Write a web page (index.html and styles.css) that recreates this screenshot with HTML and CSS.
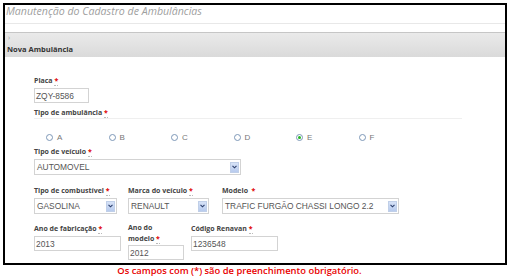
FILE: index.html
```html
<!DOCTYPE html>
<html lang="pt-BR">
<head>
<meta charset="utf-8">
<title>Manutenção do Cadastro de Ambulâncias</title>
<link rel="stylesheet" href="styles.css">
</head>
<body>
<div class="frame">
  <div class="page-title">Manutenção do Cadastro de Ambulâncias</div>
  <div class="panel-head">
    <span class="toggle">›</span>
    <span class="head-title">Nova Ambulância</span>
  </div>
  <div class="form">
    <div class="field f-placa">
      <div class="label">Placa <abbr class="req" title="obrigatório">*</abbr></div>
      <div class="input w-placa">ZQY-8586</div>
    </div>

    <div class="group">
      <div class="label group-label">Tipo de ambulância <abbr class="req" title="obrigatório">*</abbr></div>
      <div class="radios">
        <div class="radio"><span class="dot"></span><span>A</span></div>
        <div class="radio"><span class="dot"></span><span>B</span></div>
        <div class="radio"><span class="dot"></span><span>C</span></div>
        <div class="radio"><span class="dot"></span><span>D</span></div>
        <div class="radio"><span class="dot checked"></span><span>E</span></div>
        <div class="radio"><span class="dot"></span><span>F</span></div>
      </div>
    </div>

    <div class="field f-veiculo">
      <div class="label">Tipo de veículo <abbr class="req" title="obrigatório">*</abbr></div>
      <div class="select w-veiculo"><span class="val">AUTOMOVEL</span><span class="arrow"><svg width="5" height="4" viewBox="0 0 5 4"><path d="M0.5 0.8 L2.5 2.8 L4.5 0.8" fill="none" stroke="#2a3d6a" stroke-width="1.1"/></svg></span></div>
    </div>

    <div class="row row3">
      <div class="field">
        <div class="label">Tipo de combustível <abbr class="req" title="obrigatório">*</abbr></div>
        <div class="select w-comb"><span class="val">GASOLINA</span><span class="arrow"><svg width="5" height="4" viewBox="0 0 5 4"><path d="M0.5 0.8 L2.5 2.8 L4.5 0.8" fill="none" stroke="#2a3d6a" stroke-width="1.1"/></svg></span></div>
      </div>
      <div class="field">
        <div class="label">Marca do veículo <abbr class="req" title="obrigatório">*</abbr></div>
        <div class="select w-marca"><span class="val">RENAULT</span><span class="arrow"><svg width="5" height="4" viewBox="0 0 5 4"><path d="M0.5 0.8 L2.5 2.8 L4.5 0.8" fill="none" stroke="#2a3d6a" stroke-width="1.1"/></svg></span></div>
      </div>
      <div class="field">
        <div class="label">Modelo &nbsp;<span class="req plain">*</span></div>
        <div class="select w-modelo"><span class="val">TRAFIC FURGÃO CHASSI LONGO 2.2</span><span class="arrow"><svg width="5" height="4" viewBox="0 0 5 4"><path d="M0.5 0.8 L2.5 2.8 L4.5 0.8" fill="none" stroke="#2a3d6a" stroke-width="1.1"/></svg></span></div>
      </div>
    </div>

    <div class="row row4">
      <div class="field">
        <div class="label">Ano de fabricação <abbr class="req" title="obrigatório">*</abbr></div>
        <div class="input w-anofab">2013</div>
      </div>
      <div class="field">
        <div class="label two">Ano do<br>modelo <abbr class="req" title="obrigatório">*</abbr></div>
        <div class="input w-anomod">2012</div>
      </div>
      <div class="field">
        <div class="label">Código Renavan <abbr class="req" title="obrigatório">*</abbr></div>
        <div class="input w-renavan">1236548</div>
      </div>
    </div>
  </div>
</div>
<p class="note">Os campos com (*) são de preenchimento obrigatório.</p>
</body>
</html>
```

FILE: styles.css
```css
html, body {
  margin: 0;
  padding: 0;
  background: #fff;
}

body {
  width: 511px;
  height: 278px;
  overflow: hidden;
  font-family: "Open Sans", "Liberation Sans", sans-serif;
}

.frame {
  margin: 3px 0 0 3px;
  width: 500px;
  height: 258px;
  border: 2px solid #000;
  display: flex;
  flex-direction: column;
  overflow: hidden;
}

.page-title {
  height: 18px;
  line-height: 13px;
  padding-left: 1px;
  font-size: 10.6px;
  font-style: italic;
  color: #a0a0a0;
  border-bottom: 1px solid #e8e8e8;
}

.panel-head {
  margin-top: 8px;
  height: 24px;
  border-top: 1px solid #c6c6c6;
  background: linear-gradient(#eaeaea, #dadada);
  display: flex;
  flex-direction: column;
  padding-left: 2px;
}

.toggle {
  font-size: 7px;
  line-height: 8px;
  color: #999;
  padding-left: 1px;
  margin-top: 1px;
}

.head-title {
  font-size: 7.5px;
  font-weight: bold;
  color: #333;
  line-height: 12px;
  margin-top: 1px;
}

.form {
  padding: 19px 0 0 29px;
  display: flex;
  flex-direction: column;
}

.label {
  font-size: 7px;
  font-weight: bold;
  color: #444;
  line-height: 10px;
  height: 10px;
  white-space: nowrap;
}

.label.two {
  height: 20px;
  line-height: 10.5px;
}

.req {
  color: #e00000;
  text-decoration: none;
  border-bottom: 1px dotted #bbb;
  font-size: 7px;
}

.req.plain {
  border-bottom: none;
}

.input, .select {
  box-sizing: border-box;
  margin-top: 2px;
  border: 1px solid #d3d3d3;
  font-family: "Liberation Sans", Arial, sans-serif;
  font-size: 8.4px;
  color: #555;
  padding-left: 1px;
  display: flex;
  align-items: center;
  background: #fff;
}

.input {
  height: 15px;
}

.select {
  height: 16px;
  justify-content: space-between;
  padding-right: 1px;
}

.select .val {
  padding-left: 1px;
  white-space: nowrap;
}

.arrow {
  width: 9px;
  height: 11px;
  background: linear-gradient(#d6e2f7, #b8cbee);
  border: 1px solid #c0cfe8;
  box-sizing: border-box;
  display: flex;
  align-items: center;
  justify-content: center;
}

.w-placa { width: 55px; }
.w-veiculo { width: 207px; }
.w-comb { width: 83px; }
.w-marca { width: 81px; }
.w-modelo { width: 177px; }
.w-anofab { width: 87px; }
.w-anomod { width: 56px; }
.w-renavan { width: 87px; }

.group {
  margin-top: 5px;
}

.group-label {
  width: 428px;
  border-bottom: 1px solid #efefef;
  height: 10px;
}

.radios {
  display: flex;
  padding-left: 12px;
  margin-top: 11px;
  height: 14px;
  align-items: center;
}

.radio {
  width: 62.5px;
  display: flex;
  align-items: center;
  gap: 4px;
  font-family: "Liberation Sans", Arial, sans-serif;
  font-size: 8px;
  color: #777;
}

.dot {
  width: 7px;
  height: 7px;
  box-sizing: border-box;
  border: 1px solid #7d98b8;
  border-radius: 50%;
  background: #fff;
  display: flex;
  align-items: center;
  justify-content: center;
}

.dot.checked::after {
  content: "";
  width: 3px;
  height: 3px;
  border-radius: 50%;
  background: #22b522;
}

.f-veiculo {
  margin-top: 3px;
}

.row {
  display: flex;
  align-items: flex-start;
}

.row3 {
  margin-top: 11px;
}

.row3 .field:nth-child(1) { width: 94px; }
.row3 .field:nth-child(2) { width: 94px; }

.row4 {
  margin-top: 10px;
}

.row4 .field:nth-child(1) { width: 94px; }
.row4 .field:nth-child(2) { width: 63px; margin-top: -1px; }

.note {
  margin: 1px 0 0 0;
  width: 479px;
  text-align: center;
  font-size: 9.4px;
  font-weight: 600;
  color: #e80000;
  line-height: 10px;
}
```
